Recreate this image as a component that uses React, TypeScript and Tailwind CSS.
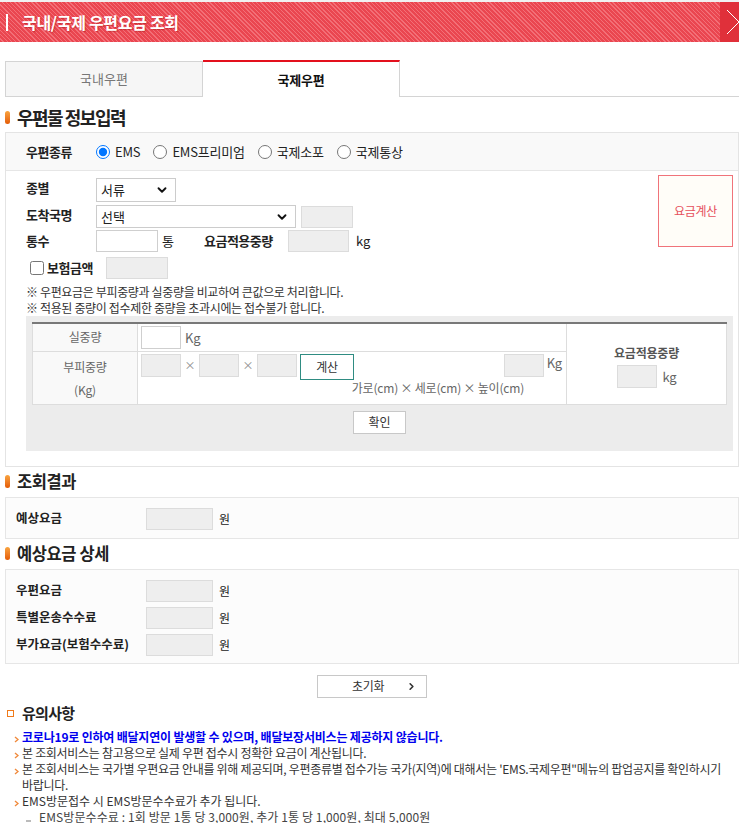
import React from "react";
import { ChevronDown, ChevronRight } from "lucide-react";

function SectionHead({ children, big }: { children: React.ReactNode; big?: boolean }) {
  return (
    <div className={"flex items-center " + (big ? "h-[35px] pt-[5px]" : "h-[30px]")}>
      <span className="ml-[5px] w-[5px] h-[13px] rounded-full bg-linear-to-b from-[#f9a43f] to-[#e35a00]" />
      <span
        className={
          "ml-[7px] font-bold text-[#222] " +
          (big ? "text-[18px] tracking-[-1.5px]" : "text-[16.5px] tracking-[-0.4px]")
        }
      >
        {children}
      </span>
    </div>
  );
}

function GrayBox({ className }: { className: string }) {
  return <div className={"bg-[#eeeeee] border border-[#dcdcdc] " + className} />;
}

function WhiteBox({ className }: { className: string }) {
  return <div className={"bg-white border border-[#cfcfcf] " + className} />;
}

function Radio({ label, checked }: { label: string; checked?: boolean }) {
  return (
    <label className="flex items-center">
      <input
        type="radio"
        name="kind"
        defaultChecked={checked}
        className="w-[14px] h-[14px] m-0 accent-[#0075ff]"
      />
      <span className="ml-[5px] text-[13px] tracking-[-0.2px] text-[#222]">{label}</span>
    </label>
  );
}

function Bullet() {
  return (
    <span className="w-[22px] shrink-0 flex justify-start pl-[14px] pt-[7px]">
      <svg width="5" height="7" viewBox="0 0 5 7">
        <polyline points="1,1 4,3.5 1,6" fill="none" stroke="#f08a3c" strokeWidth="1.4" />
      </svg>
    </span>
  );
}

export default function App() {
  const lbl = "text-[13px] font-bold tracking-[-0.5px] text-[#222]";
  return (
    <div className="w-[739px] bg-white font-['Noto_Sans_CJK_KR',sans-serif] text-[#333] pb-[6px]">
      {/* Header */}
      <div className="h-[42px] border-t-2 border-t-[#f1f1f1] flex">
        <div className="flex-1 flex items-center bg-[repeating-linear-gradient(45deg,#ea4650_0px,#ea4650_2px,#f36f77_2px,#f36f77_3px)]">
          <span className="ml-[6px] w-[2px] h-[17px] bg-white" />
          <span className="ml-[14px] text-white text-[16px] font-bold tracking-[-0.3px] [text-shadow:1px_1px_1px_rgba(140,0,0,0.35)]">
            국내/국제 우편요금 조회
          </span>
        </div>
        <div className="w-[19px] bg-[#e0303a] flex items-center">
          <svg width="19" height="40" viewBox="0 0 19 40">
            <polyline points="7,8 19,20 7,32" fill="none" stroke="#ffffff" strokeWidth="1" />
          </svg>
        </div>
      </div>

      {/* Tabs */}
      <div className="mt-[18px] flex items-end pl-[5px]">
        <div className="w-[198px] h-[36px] bg-[#f6f6f6] border border-[#d4d4d4] flex items-center justify-center text-[13px] tracking-[0px] text-[#777]">
          국내우편
        </div>
        <div className="w-[197px] h-[37px] bg-white border-t-2 border-t-[#e3101d] border-r border-r-[#d4d4d4] flex items-center justify-center text-[13px] font-bold tracking-[-0.2px] text-[#111]">
          국제우편
        </div>
        <div className="flex-1 h-[37px] border-b border-b-[#d4d4d4]" />
      </div>

      <SectionHead big>우편물 정보입력</SectionHead>

      {/* Form box */}
      <div className="ml-[5px] border border-[#e4e4e4] bg-white">
        <div className="h-[38px] bg-[#f9f9f9] border-b border-b-[#e6e6e6] flex items-center pl-[20px]">
          <span className={lbl + " w-[70px]"}>우편종류</span>
          <div className="flex items-center gap-[13px]">
            <Radio label="EMS" checked />
            <Radio label="EMS프리미엄" />
            <Radio label="국제소포" />
            <Radio label="국제통상" />
          </div>
        </div>

        <div className="pl-[20px] pr-[5px] pb-[15px]">
          <div className="flex justify-between items-start">
            <div className="pt-[7px] flex flex-col">
              <div className="flex items-center h-[24px]">
                <span className={lbl + " w-[70px] self-start"}>종별</span>
                <div className="w-[80px] h-[24px] border border-[#cccccc] bg-white flex items-center justify-between pl-[4px] pr-[6px] text-[13px] text-[#222]">
                  <span>서류</span>
                  <ChevronDown size={14} strokeWidth={3.2} color="#111" />
                </div>
              </div>
              <div className="flex items-center h-[23px] mt-[3px]">
                <span className={lbl + " w-[70px] self-start"}>도착국명</span>
                <div className="w-[200px] h-[23px] border border-[#cccccc] bg-white flex items-center justify-between pl-[4px] pr-[6px] text-[13px] text-[#222]">
                  <span>선택</span>
                  <ChevronDown size={14} strokeWidth={3.2} color="#111" />
                </div>
                <GrayBox className="ml-[5px] w-[52px] h-[22px]" />
              </div>
              <div className="flex items-center h-[22px] mt-[2px]">
                <span className={lbl + " w-[70px]"}>통수</span>
                <WhiteBox className="w-[62px] h-[22px]" />
                <span className="ml-[4px] text-[13px] text-[#222]">통</span>
                <span className={lbl + " ml-[30px] w-[84px]"}>요금적용중량</span>
                <GrayBox className="w-[61px] h-[22px]" />
                <span className="ml-[7px] text-[13px] text-[#222]">kg</span>
              </div>
              <div className="flex items-center h-[22px] mt-[5px]">
                <input type="checkbox" className="ml-[4px] w-[14px] h-[14px] m-0" />
                <span className={lbl + " ml-[3px] w-[59px]"}>보험금액</span>
                <GrayBox className="w-[62px] h-[22px]" />
              </div>
            </div>
            <button className="mt-[4px] w-[75px] h-[72px] border border-[#f0737a] bg-[#fffdf8] text-[12px] tracking-[-0.3px] text-[#e6505c]">
              요금계산
            </button>
          </div>

          <div className="mt-[5px] text-[12px] leading-[16px] tracking-[-0.35px] text-[#333]">
            <div>※ 우편요금은 부피중량과 실중량을 비교하여 큰값으로 처리합니다.</div>
            <div>※ 적용된 중량이 접수제한 중량을 초과시에는 접수불가 합니다.</div>
          </div>

          <div className="bg-[#ececec] px-[6px] pt-[6px] pb-[17px]">
            <table className="w-full border-collapse bg-white border-t-2 border-t-[#787878] text-[12px] tracking-[-0.2px]">
              <tbody>
                <tr className="h-[28px]">
                  <td className="p-0 w-[105px] bg-[#f9f9f9] border border-[#dddddd] text-center text-[#666]">
                    실중량
                  </td>
                  <td className="p-0 border border-[#dddddd]">
                    <div className="flex items-center pl-[3px]">
                      <WhiteBox className="w-[40px] h-[23px]" />
                      <span className="ml-[4px] text-[#666] text-[13px]">Kg</span>
                    </div>
                  </td>
                  <td rowSpan={2} className="p-0 w-[160px] border border-[#dddddd] align-top pt-[21px]">
                    <div className="text-center font-bold text-[#555] leading-[16px]">요금적용중량</div>
                    <div className="mt-[4px] flex items-center justify-center">
                      <GrayBox className="w-[40px] h-[23px]" />
                      <span className="ml-[6px] text-[#666] text-[13px]">kg</span>
                    </div>
                  </td>
                </tr>
                <tr className="h-[53px]">
                  <td className="p-0 bg-[#f9f9f9] border border-[#dddddd] text-center text-[#666] leading-[23px]">
                    부피중량
                    <br />
                    (Kg)
                  </td>
                  <td className="p-0 border border-[#dddddd] align-top">
                    <div className="flex items-start pt-[2px] pl-[3px] pr-[4px]">
                      <GrayBox className="w-[40px] h-[23px]" />
                      <span className="w-[18px] text-center text-[#888] text-[11px] leading-[23px]">×</span>
                      <GrayBox className="w-[40px] h-[23px]" />
                      <span className="w-[18px] text-center text-[#888] text-[11px] leading-[23px]">×</span>
                      <GrayBox className="w-[40px] h-[23px]" />
                      <button className="ml-[3px] w-[54px] h-[26px] border border-[#2f8c82] bg-white text-[12px] text-[#333]">
                        계산
                      </button>
                      <div className="flex-1" />
                      <GrayBox className="w-[40px] h-[23px]" />
                      <span className="ml-[3px] text-[#666] text-[13px] leading-[18px]">Kg</span>
                    </div>
                    <div className="text-right pr-[42px] leading-[16px] text-[#666] tracking-[-0.2px]">
                      가로(cm) × 세로(cm) × 높이(cm)
                    </div>
                  </td>
                </tr>
              </tbody>
            </table>
            <div className="mt-[6px] flex justify-center">
              <button className="w-[53px] h-[23px] border border-[#c8c8c8] bg-white text-[12px] text-[#333]">
                확인
              </button>
            </div>
          </div>
        </div>
      </div>

      <SectionHead>조회결과</SectionHead>
      <div className="ml-[5px] border border-[#e6e6e6] bg-[#fcfcfc] pl-[10px] pt-[10px] pb-[8px]">
        <div className="flex items-center h-[22px]">
          <span className="w-[130px] text-[12.5px] font-bold tracking-[0px] text-[#222]">예상요금</span>
          <GrayBox className="w-[67px] h-[22px]" />
          <span className="ml-[6px] text-[12px] text-[#222]">원</span>
        </div>
      </div>

      <SectionHead>예상요금 상세</SectionHead>
      <div className="ml-[5px] border border-[#e6e6e6] bg-[#fcfcfc] pl-[10px] pt-[10px] pb-[7px] flex flex-col gap-[5px]">
        {["우편요금", "특별운송수수료", "부가요금(보험수수료)"].map((t) => (
          <div key={t} className="flex items-center h-[22px]">
            <span className="w-[130px] text-[12.5px] font-bold tracking-[0px] text-[#222]">{t}</span>
            <GrayBox className="w-[67px] h-[22px]" />
            <span className="ml-[6px] text-[12px] text-[#222]">원</span>
          </div>
        ))}
      </div>

      <div className="mt-[11px] flex justify-center pl-[5px]">
        <button className="w-[110px] h-[23px] border border-[#c8c8c8] bg-white flex items-center pl-[34px] text-[12px] tracking-[-0.3px] text-[#333]">
          <span>초기화</span>
          <ChevronRight size={11} strokeWidth={3.5} color="#333" className="ml-[22px]" />
        </button>
      </div>

      <div className="h-[31px] flex items-center">
        <span className="ml-[7px] w-[7px] h-[7px] border-[1.5px] border-[#f07a1a]" />
        <span className="ml-[8px] text-[15px] font-bold tracking-[-0.7px] text-[#222]">유의사항</span>
      </div>

      <div className="text-[12px] leading-[16px] tracking-[-0.3px] text-[#333]">
        <div className="flex">
          <Bullet />
          <span className="font-bold text-[#0000ee] tracking-[-0.2px]">
            코로나19로 인하여 배달지연이 발생할 수 있으며, 배달보장서비스는 제공하지 않습니다.
          </span>
        </div>
        <div className="flex">
          <Bullet />
          <span>본 조회서비스는 참고용으로 실제 우편 접수시 정확한 요금이 계산됩니다.</span>
        </div>
        <div className="flex">
          <Bullet />
          <span>
            <span className="whitespace-nowrap">
              본 조회서비스는 국가별 우편요금 안내를 위해 제공되며, 우편종류별 접수가능 국가(지역)에 대해서는 'EMS.국제우편"메뉴의 팝업공지를 확인하시기
            </span>
            <br />
            바랍니다.
          </span>
        </div>
        <div className="flex">
          <Bullet />
          <span className="tracking-[0px]">EMS방문접수 시 EMS방문수수료가 추가 됩니다.</span>
        </div>
        <div className="flex">
          <span className="w-[39px] shrink-0 flex pl-[26px] pt-[11px]">
            <span className="w-[5px] h-[2px] bg-[#bbbbbb]" />
          </span>
          <span className="text-[#444] tracking-[0.1px]">EMS방문수수료 : 1회 방문 1통 당 3,000원, 추가 1통 당 1,000원, 최대 5,000원</span>
        </div>
      </div>
    </div>
  );
}
